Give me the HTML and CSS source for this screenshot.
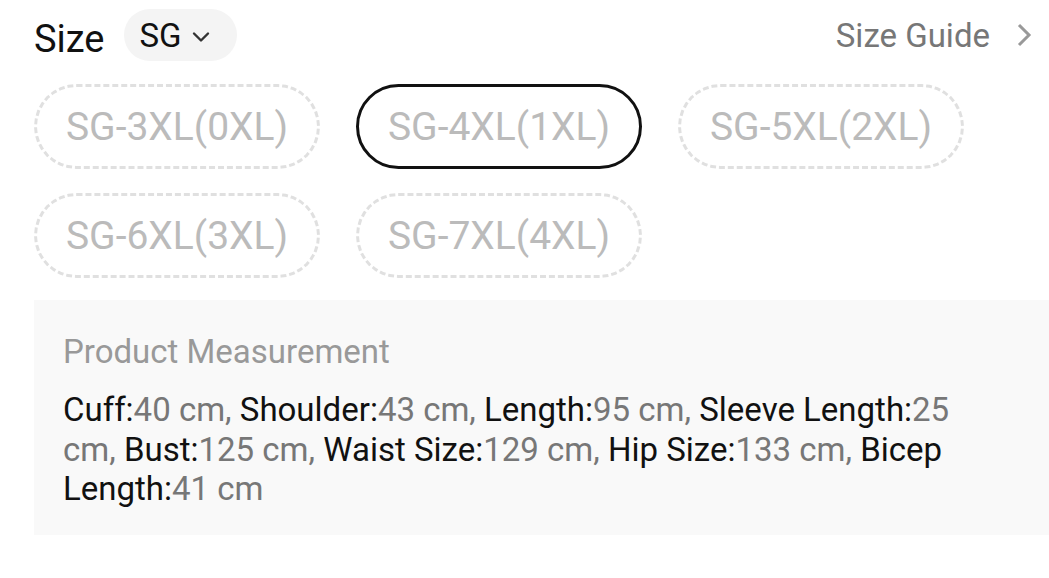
FILE: index.html
```html
<!DOCTYPE html>
<html>
<head>
<meta charset="utf-8">
<link rel="stylesheet" href="styles.css">
</head>
<body>
<div class="page">
  <div class="header">
    <div class="header-left">
      <span class="title">Size</span>
      <span class="region">SG
        <svg class="chev-down" width="18" height="12" viewBox="0 0 18 12"><path d="M2 2.5 L9 9.5 L16 2.5" fill="none" stroke="#333" stroke-width="2.4" stroke-linecap="round" stroke-linejoin="round"/></svg>
      </span>
    </div>
    <div class="guide">Size Guide
      <svg class="chev-right" width="16" height="24" viewBox="0 0 16 24"><path d="M3 2 L13 12 L3 22" fill="none" stroke="#999" stroke-width="3" stroke-linejoin="miter"/></svg>
    </div>
  </div>
  <div class="options">
    <div class="opt">SG-3XL(0XL)</div>
    <div class="opt selected">SG-4XL(1XL)</div>
    <div class="opt">SG-5XL(2XL)</div>
    <div class="opt">SG-6XL(3XL)</div>
    <div class="opt">SG-7XL(4XL)</div>
  </div>
  <div class="measure">
    <div class="measure-title">Product Measurement</div>
    <p class="measure-text"><span class="k">Cuff:</span><span class="v">40 cm, </span><span class="k">Shoulder:</span><span class="v">43 cm, </span><span class="k">Length:</span><span class="v">95 cm, </span><span class="k">Sleeve Length:</span><span class="v">25 cm, </span><span class="k">Bust:</span><span class="v">125 cm, </span><span class="k">Waist Size:</span><span class="v">129 cm, </span><span class="k">Hip Size:</span><span class="v">133 cm, </span><span class="k">Bicep Length:</span><span class="v">41 cm</span></p>
  </div>
</div>
</body>
</html>
```

FILE: styles.css
```css
* { box-sizing: border-box; }
html, body { margin: 0; background: #fff; }
body { font-family: Roboto, "Noto Sans", Arial, sans-serif; overflow: hidden; }
.page { padding: 9px 0 0 34px; width: 1049px; }
.header { display: flex; align-items: center; justify-content: space-between; height: 52px; padding-right: 17px; }
.header-left { display: flex; align-items: center; gap: 19px; }
.title { font-size: 38px; color: #111; line-height: 1; padding-top: 8px; }
.region { display: inline-flex; align-items: center; gap: 10px; height: 52px; padding: 0 27px 0 16px; border-radius: 26px; background: #f4f4f4; font-size: 33px; line-height: 1; color: #111; }
.chev-down { margin-top: 3px; }
.guide { display: flex; align-items: center; gap: 26px; font-size: 33px; line-height: 1; color: #777; }
.options { display: grid; grid-template-columns: repeat(3, 286px); column-gap: 36px; row-gap: 24px; margin-top: 23px; }
.opt { height: 85px; border: 3px dashed #e0e0e0; border-radius: 43px; display: flex; align-items: center; justify-content: center; font-size: 39px; color: #bbb; }
.opt.selected { border: 3px solid #111; }
.measure { margin-top: 22px; background: #f9f9f9; height: 235px; padding: 32px 66px 0 29px; }
.measure-title { font-size: 33px; color: #999; line-height: 40px; }
.measure-text { margin: 18px 0 0; font-size: 33px; line-height: 39.5px; color: #111; }
.k { color: #111; }
.v { color: #777; }
```
